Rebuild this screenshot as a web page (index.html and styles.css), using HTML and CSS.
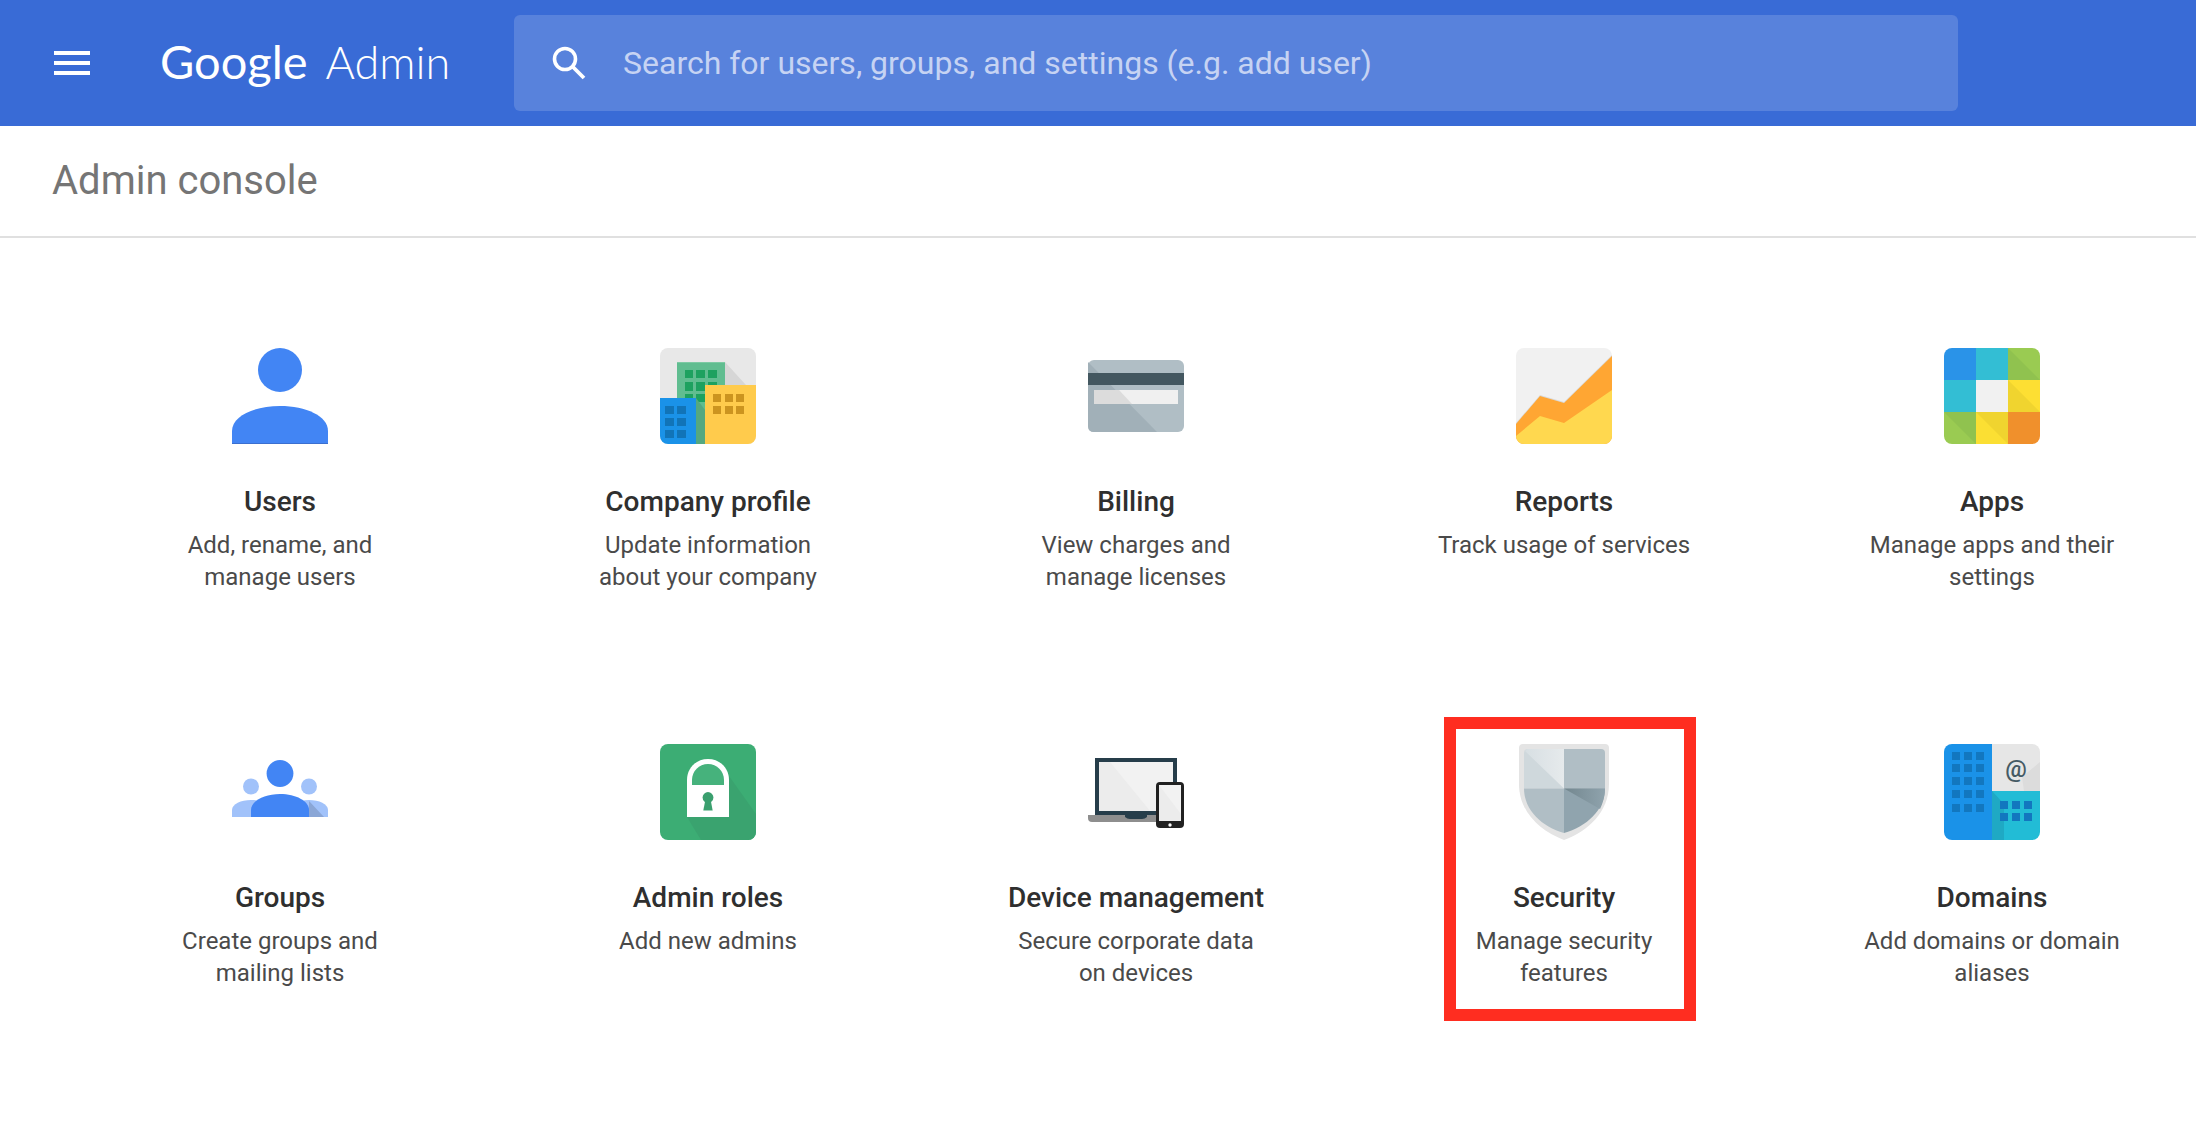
FILE: index.html
```html
<!DOCTYPE html>
<html lang="en">
<head>
    <meta charset="UTF-8">
    <meta name="viewport" content="width=device-width, initial-scale=1.0">
    <title>Admin console</title>
    <link rel="stylesheet" href="styles.css">
</head>
<body>
    <header class="topbar">
        <div class="menu-btn"><span></span><span></span><span></span></div>
        <div class="logo"><span class="logo-google">Google</span><span class="logo-admin">Admin</span></div>
        <div class="search">
            <svg class="search-icon" viewBox="0 0 34 34">
                <circle cx="13" cy="13" r="10.5" fill="none" stroke="#fff" stroke-width="3.6"/>
                <path d="M20.5 20.5L32 32" stroke="#fff" stroke-width="3.8" fill="none"/>
            </svg>
            <span class="search-text">Search for users, groups, and settings (e.g. add user)</span>
        </div>
    </header>

    <div class="titlebar">Admin console</div>

    <main class="grid">
        <div class="card">
            <svg class="icon" viewBox="0 0 96 96">
                <circle cx="48" cy="22" r="22" fill="#4285f4"/>
                <path d="M0 96V83C0 68 22 58 48 58S96 68 96 83V96Z" fill="#4285f4"/>
                <rect y="95" width="96" height="1" fill="#3b6fcf"/>
            </svg>
            <h3>Users</h3>
            <p>Add, rename, and<br>manage users</p>
        </div>

        <div class="card">
            <svg class="icon rounded" viewBox="0 0 96 96">
                <rect width="96" height="96" fill="#e8e8e8"/>
                <path d="M65 14L96 48V60H65Z" fill="#d6d6d6"/>
                <rect x="17" y="14" width="48" height="82" fill="#60bd90"/>
                <rect x="17" y="14" width="48" height="1" fill="#7ccaa3"/>
                <g fill="#1da15f">
                    <rect x="25" y="22" width="8" height="8"/><rect x="36" y="22" width="9" height="8"/><rect x="48" y="22" width="9" height="8"/>
                    <rect x="25" y="34" width="8" height="9"/><rect x="36" y="34" width="9" height="9"/><rect x="48" y="34" width="9" height="9"/>
                    <rect x="25" y="46" width="8" height="8"/><rect x="36" y="46" width="9" height="8"/>
                </g>
                <path d="M36 50L45 62V96H36Z" fill="#55a880"/>
                <rect x="45" y="37" width="51" height="59" fill="#ffcb4c"/>
                <g fill="#cc941f">
                    <rect x="53" y="46" width="8" height="8"/><rect x="65" y="46" width="8" height="8"/><rect x="76" y="46" width="8" height="8"/>
                    <rect x="53" y="58" width="8" height="8"/><rect x="65" y="58" width="8" height="8"/><rect x="76" y="58" width="8" height="8"/>
                </g>
                <rect y="50" width="36" height="46" fill="#1a92e8"/>
                <g fill="#1174b8">
                    <rect x="5" y="58" width="9" height="8"/><rect x="17" y="58" width="9" height="8"/>
                    <rect x="5" y="70" width="9" height="8"/><rect x="17" y="70" width="9" height="8"/>
                    <rect x="5" y="82" width="9" height="8"/><rect x="17" y="82" width="9" height="8"/>
                </g>
            </svg>
            <h3>Company profile</h3>
            <p>Update information<br>about your company</p>
        </div>

        <div class="card">
            <svg class="icon" viewBox="0 0 96 96">
                <rect y="12" width="96" height="72" rx="6" fill="#b0bec5"/>
                <path d="M0 14L69 84H6Q0 84 0 78Z" fill="#a1b0b8"/>
                <rect y="25" width="96" height="12" fill="#435760"/>
                <rect x="6" y="42" width="84" height="14" fill="#f0f0f0"/>
                <path d="M6 42H31L44 56H6Z" fill="#dcdcdc"/>
            </svg>
            <h3>Billing</h3>
            <p>View charges and<br>manage licenses</p>
        </div>

        <div class="card">
            <svg class="icon rounded" viewBox="0 0 96 96">
                <rect width="96" height="96" fill="#f1f1f1"/>
                <path d="M0 75L24 47L48 54L96 7V44L48 76L24 68L0 88Z" fill="#d9d9d9"/>
                <path d="M0 76L24 48L48 55L96 8V96H0Z" fill="#ffa633"/>
                <path d="M0 88L24 68L48 75L96 42V96H0Z" fill="#ffd84f"/>
            </svg>
            <h3>Reports</h3>
            <p>Track usage of services</p>
        </div>

        <div class="card">
            <svg class="icon rounded" viewBox="0 0 96 96">
                <rect width="32" height="32" fill="#2a93e8"/>
                <rect x="32" width="32" height="32" fill="#33bed4"/>
                <rect x="64" width="32" height="32" fill="#9acb52"/>
                <path d="M64 0L96 32H64Z" fill="#90c24f"/>
                <rect y="32" width="32" height="32" fill="#33bed4"/>
                <rect x="32" y="32" width="32" height="32" fill="#f1f1f1"/>
                <rect x="64" y="32" width="32" height="32" fill="#fddf33"/>
                <path d="M64 32L96 64H64Z" fill="#f0d42f"/>
                <rect y="64" width="32" height="32" fill="#9acb52"/>
                <path d="M0 64H32V96Z" fill="#90c24f"/>
                <rect x="32" y="64" width="32" height="32" fill="#fbdf33"/>
                <path d="M32 64H64V96Z" fill="#f0d42f"/>
                <rect x="64" y="64" width="32" height="32" fill="#f0902c"/>
            </svg>
            <h3>Apps</h3>
            <p>Manage apps and their<br>settings</p>
        </div>

        <div class="card">
            <svg class="icon" viewBox="0 0 96 96">
                <circle cx="19" cy="42.5" r="8" fill="#a1c2fa"/>
                <circle cx="77" cy="42.5" r="8" fill="#a1c2fa"/>
                <path d="M0 73V66C0 60 9 56 19 56S38 60 38 66V73Z" fill="#a1c2fa"/>
                <path d="M58 73V66C58 60 67 56 77 56S96 60 96 66V73Z" fill="#a1c2fa"/>
                <path d="M77 57L92 73H77Z" fill="#8aa6d6"/>
                <circle cx="48" cy="29.5" r="13.4" fill="#4285f4"/>
                <path d="M19 73V66C19 57 32 50 48 50S77 57 77 66V73Z" fill="#4285f4"/>
            </svg>
            <h3>Groups</h3>
            <p>Create groups and<br>mailing lists</p>
        </div>

        <div class="card">
            <svg class="icon rounded" viewBox="0 0 96 96">
                <rect width="96" height="96" fill="#3cad74"/>
                <path d="M69 32L96 70V96H41L27 73Z" fill="#3aa36f"/>
                <path d="M27 73V36C27 24 36 15 48 15S69 24 69 36V73Z" fill="#fff"/>
                <path d="M32 41V36C32 27 39 20 48 20S64 27 64 36V41Z" fill="#46b27c"/>
                <circle cx="48" cy="53.5" r="5.4" fill="#3a9f6e"/>
                <path d="M45.5 55H50.5L52.7 66.5H43.3Z" fill="#3a9f6e"/>
            </svg>
            <h3>Admin roles</h3>
            <p>Add new admins</p>
        </div>

        <div class="card">
            <svg class="icon" viewBox="0 0 96 96">
                <rect x="7" y="14" width="82" height="58" fill="#263d4a"/>
                <rect x="11" y="18" width="74" height="49" fill="#ececec"/>
                <path d="M22 18H85V67H62Z" fill="#f2f2f2"/>
                <path d="M0 71H72V78H4Q0 78 0 74Z" fill="#8e8e8e"/>
                <path d="M37 71H59V73Q57 75 54 75H42Q39 75 37 73Z" fill="#263d4a"/>
                <rect x="68" y="38" width="28" height="46" rx="4" fill="#212121"/>
                <rect x="71" y="41" width="22" height="36" fill="#ececec"/>
                <path d="M71 41L93 70V41Z" fill="#f2f2f2"/>
                <circle cx="82" cy="81" r="1.7" fill="#fff"/>
            </svg>
            <h3>Device management</h3>
            <p>Secure corporate data<br>on devices</p>
        </div>

        <div class="card">
            <div class="highlight"></div>
            <svg class="icon" viewBox="0 0 96 96">
                <defs>
                    <linearGradient id="shield-light" x1="0" y1="0" x2="1" y2="0">
                        <stop offset="0" stop-color="#d7dfe3"/>
                        <stop offset="1" stop-color="#e6eaec"/>
                    </linearGradient>
                    <linearGradient id="shield-dark" x1="0" y1="0" x2="1" y2="0">
                        <stop offset="0" stop-color="#73878f"/>
                        <stop offset="1" stop-color="#8fa3ad"/>
                    </linearGradient>
                </defs>
                <path d="M7 0H89A4 4 0 0 1 93 4V40C93 68 72 87 48 96C24 87 3 68 3 40V4A4 4 0 0 1 7 0Z" fill="#e4e4e4"/>
                <path d="M12 5H48V44.5H8V9A4 4 0 0 1 12 5Z" fill="#cfd8dc"/>
                <path d="M9 7L48 44.5V5H12Q10 5 9 7Z" fill="url(#shield-light)"/>
                <path d="M48 5H85A4 4 0 0 1 89 9V44.5H48Z" fill="#b0bec5"/>
                <path d="M8 44.5H48V89C26 83 8 66 8 44.5Z" fill="#b0bec5"/>
                <path d="M48 44.5H89C89 66 70 83 48 89Z" fill="#90a4ae"/>
                <path d="M48 44.5H89C89 52 87 59 84 65Z" fill="url(#shield-dark)"/>
            </svg>
            <h3>Security</h3>
            <p>Manage security<br>features</p>
        </div>

        <div class="card">
            <svg class="icon rounded" viewBox="0 0 96 96">
                <rect width="48" height="96" fill="#1a92e8"/>
                <g fill="#1277bf">
                    <rect x="8" y="8" width="8" height="8"/><rect x="20" y="8" width="8" height="8"/><rect x="32" y="8" width="8" height="8"/>
                    <rect x="8" y="20" width="8" height="8"/><rect x="20" y="20" width="8" height="8"/><rect x="32" y="20" width="8" height="8"/>
                    <rect x="8" y="33" width="8" height="8"/><rect x="20" y="33" width="8" height="8"/><rect x="32" y="33" width="8" height="8"/>
                    <rect x="8" y="46" width="8" height="8"/><rect x="20" y="46" width="8" height="8"/><rect x="32" y="46" width="8" height="8"/>
                    <rect x="8" y="60" width="8" height="8"/><rect x="20" y="60" width="8" height="8"/><rect x="32" y="60" width="8" height="8"/>
                </g>
                <rect x="48" width="48" height="47" fill="#e6e6e6"/>
                <path d="M78 33L96 18V47H80Z" fill="#dcdcdc"/>
                <text class="at-sign" x="72" y="33">@</text>
                <rect x="48" y="47" width="48" height="49" fill="#22bcd6"/>
                <path d="M48 47L60 60V96H48Z" fill="#1fa9c4"/>
                <g fill="#1277bf">
                    <rect x="56" y="57" width="8" height="8"/><rect x="68" y="57" width="8" height="8"/><rect x="80" y="57" width="8" height="8"/>
                    <rect x="56" y="69" width="8" height="8"/><rect x="68" y="69" width="8" height="8"/><rect x="80" y="69" width="8" height="8"/>
                </g>
            </svg>
            <h3>Domains</h3>
            <p>Add domains or domain<br>aliases</p>
        </div>
    </main>
</body>
</html>
```

FILE: styles.css
```css
body {
    margin: 0;
    background: #fff;
    font-family: Roboto, "Liberation Sans", sans-serif;
    overflow: hidden;
}

.topbar {
    display: flex;
    align-items: center;
    height: 126px;
    background: #396bd6;
}
.menu-btn {
    display: flex;
    flex-direction: column;
    justify-content: space-between;
    width: 36px;
    height: 24px;
    margin-left: 54px;
}
.menu-btn span {
    display: block;
    height: 4px;
    background: #fff;
}
.logo {
    display: flex;
    align-items: baseline;
    width: 354px;
    margin-left: 70px;
    padding-bottom: 4px;
    color: #fff;
    font-family: Lato, sans-serif;
}
.logo-google {
    font-size: 47px;
    margin-right: 18px;
}
.logo-admin {
    font-size: 45px;
    font-weight: 300;
}
.search {
    display: flex;
    align-items: center;
    width: 1444px;
    height: 96px;
    background: #5882dc;
    border-radius: 6px;
}
.search-icon {
    width: 34px;
    height: 34px;
    margin-left: 38px;
}
.search-text {
    margin-left: 37px;
    font-size: 32px;
    color: #c6d3f3;
}

.titlebar {
    height: 110px;
    line-height: 110px;
    padding-left: 52px;
    font-size: 40px;
    color: #757575;
    border-bottom: 2px solid #e0e0e0;
}

.grid {
    display: grid;
    grid-template-columns: repeat(5, 428px);
    grid-auto-rows: 396px;
    padding: 110px 0 0 66px;
}
.card {
    position: relative;
    display: flex;
    flex-direction: column;
    align-items: center;
    text-align: center;
}
.icon {
    display: block;
    width: 96px;
    height: 96px;
}
.rounded {
    border-radius: 8px;
}
.at-sign {
    font-family: Roboto, sans-serif;
    font-size: 24px;
    font-weight: 500;
    fill: #455a64;
    text-anchor: middle;
}
.card h3 {
    margin: 41px 0 0;
    font-size: 28px;
    line-height: 34px;
    font-weight: 500;
    color: #2f2f2f;
}
.card p {
    margin: 10px 0 0;
    font-size: 24px;
    line-height: 32px;
    color: #4a4a4a;
}
.highlight {
    position: absolute;
    left: 94px;
    top: -27px;
    width: 228px;
    height: 280px;
    border: 12px solid #ff2d20;
}
```
